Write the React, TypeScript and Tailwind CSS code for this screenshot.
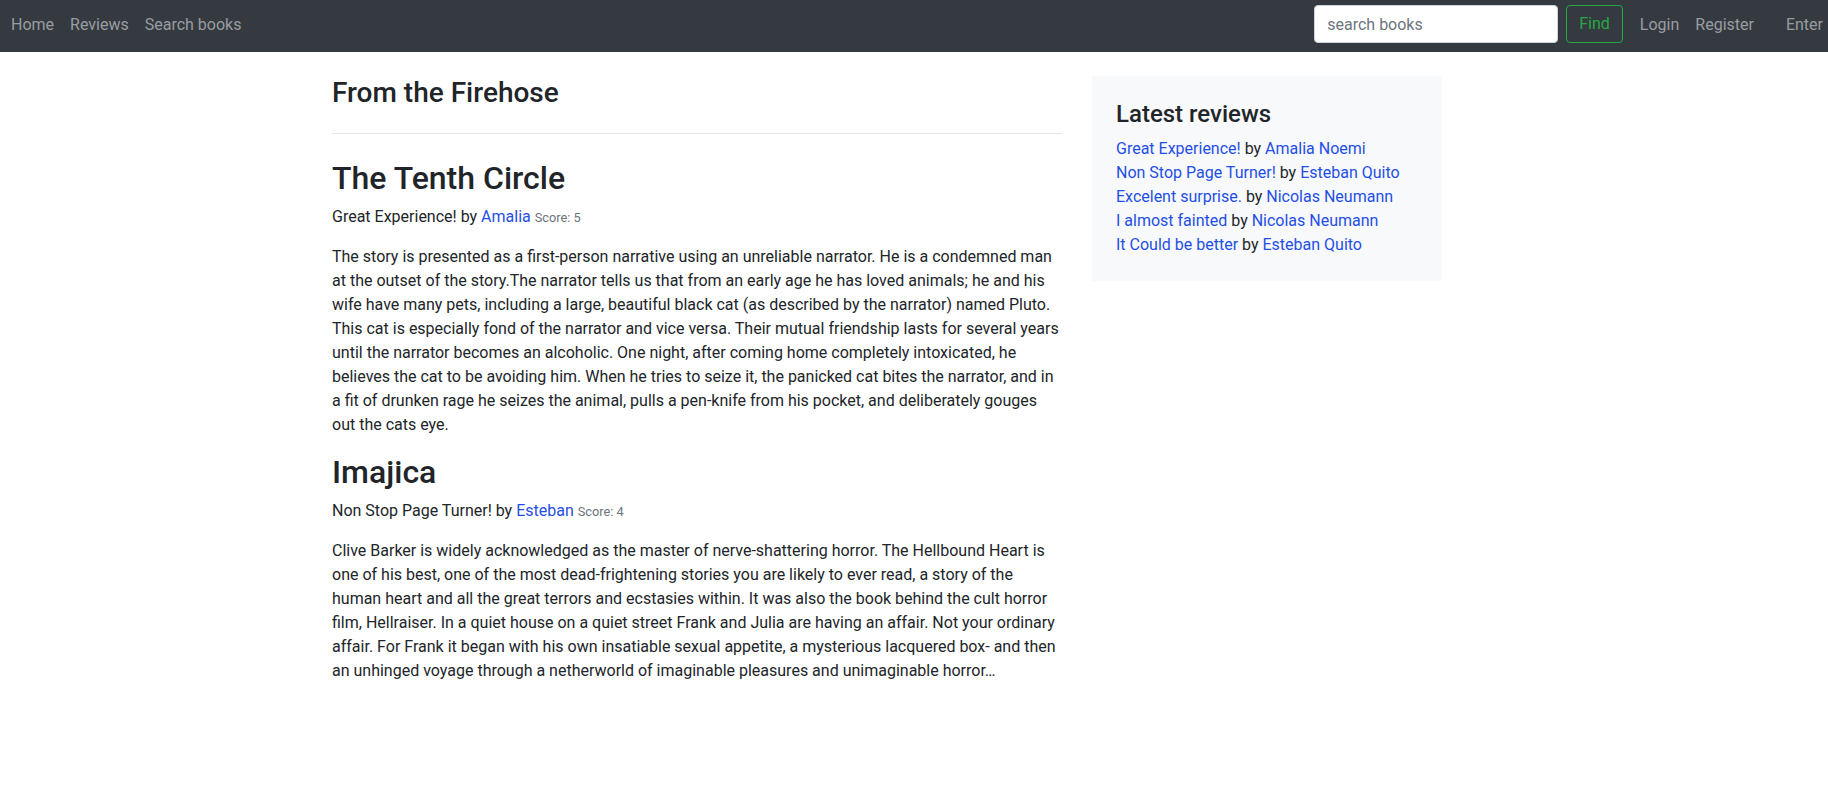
import React from "react";

const linkCls = "text-[#1f4fe6] no-underline";

function Review({
  title,
  headline,
  author,
  score,
  body,
}: {
  title: string;
  headline: string;
  author: string;
  score: number;
  body: string;
}) {
  return (
    <article>
      <h2 className="text-[32px] font-medium leading-[1.2] mb-2 text-[#212529]">{title}</h2>
      <p className="mb-4">
        {headline} by <a className={linkCls} href="#">{author}</a>{" "}
        <small className="text-[12.8px] text-[#6c757d]">Score: {score}</small>
      </p>
      <p className="mb-4">{body}</p>
    </article>
  );
}

const latest: [string, string][] = [
  ["Great Experience!", "Amalia Noemi"],
  ["Non Stop Page Turner!", "Esteban Quito"],
  ["Excelent surprise.", "Nicolas Neumann"],
  ["I almost fainted", "Nicolas Neumann"],
  ["It Could be better", "Esteban Quito"],
];

export default function App() {
  return (
    <div className="min-h-screen bg-white font-['Roboto',_'Liberation_Sans',_sans-serif] text-[16px] leading-[1.5] text-[#212529]">
      <nav className="h-[52px] bg-[#343a40] flex items-start pt-[5px] pl-[3px] pr-[5px]">
        <div className="flex">
          <a className="px-2 py-2 text-[#9a9da0]" href="#">Home</a>
          <a className="px-2 py-2 text-[#9a9da0]" href="#">Reviews</a>
          <a className="px-2 py-2 text-[#9a9da0]" href="#">Search books</a>
        </div>
        <div className="ml-auto flex items-start">
          <input
            className="h-[38px] w-[244px] rounded-[4px] border border-[#ced4da] bg-white px-3 text-[16px] text-[#495057] placeholder:text-[#6c757d] outline-none"
            placeholder="search books"
          />
          <button className="ml-[8px] h-[38px] rounded-[4px] border border-[#28a745] px-3 text-[#28a745] bg-transparent">
            Find
          </button>
          <a className="ml-[9px] px-2 py-2 text-[#9a9da0]" href="#">Login</a>
          <a className="px-2 py-2 text-[#9a9da0]" href="#">Register</a>
          <a className="ml-[16px] pl-2 py-2 text-[#9a9da0]" href="#">Enter</a>
        </div>
      </nav>

      <div className="mt-6 ml-[317px] w-[1140px] flex items-start">
        <main className="w-[760px] px-[15px]">
          <h3 className="text-[28px] font-medium leading-[1.2]">From the Firehose</h3>
          <hr className="mt-[23px] mb-[25px] border-0 border-t border-[rgba(0,0,0,0.1)]" />
          <Review
            title="The Tenth Circle"
            headline="Great Experience!"
            author="Amalia"
            score={5}
            body="The story is presented as a first-person narrative using an unreliable narrator. He is a condemned man at the outset of the story.The narrator tells us that from an early age he has loved animals; he and his wife have many pets, including a large, beautiful black cat (as described by the narrator) named Pluto. This cat is especially fond of the narrator and vice versa. Their mutual friendship lasts for several years until the narrator becomes an alcoholic. One night, after coming home completely intoxicated, he believes the cat to be avoiding him. When he tries to seize it, the panicked cat bites the narrator, and in a fit of drunken rage he seizes the animal, pulls a pen-knife from his pocket, and deliberately gouges out the cats eye."
          />
          <Review
            title="Imajica"
            headline="Non Stop Page Turner!"
            author="Esteban"
            score={4}
            body="Clive Barker is widely acknowledged as the master of nerve-shattering horror. The Hellbound Heart is one of his best, one of the most dead-frightening stories you are likely to ever read, a story of the human heart and all the great terrors and ecstasies within. It was also the book behind the cult horror film, Hellraiser. In a quiet house on a quiet street Frank and Julia are having an affair. Not your ordinary affair. For Frank it began with his own insatiable sexual appetite, a mysterious lacquered box- and then an unhinged voyage through a netherworld of imaginable pleasures and unimaginable horror…"
          />
        </main>
        <aside className="w-[380px] px-[15px]">
          <div className="bg-[#f8f9fa] p-6">
            <h4 className="text-[24px] font-medium leading-[1.2] mb-2">Latest reviews</h4>
            {latest.map(([t, a], i) => (
              <div key={i}>
                <a className={linkCls} href="#">{t}</a> by <a className={linkCls} href="#">{a}</a>
              </div>
            ))}
          </div>
        </aside>
      </div>
    </div>
  );
}
